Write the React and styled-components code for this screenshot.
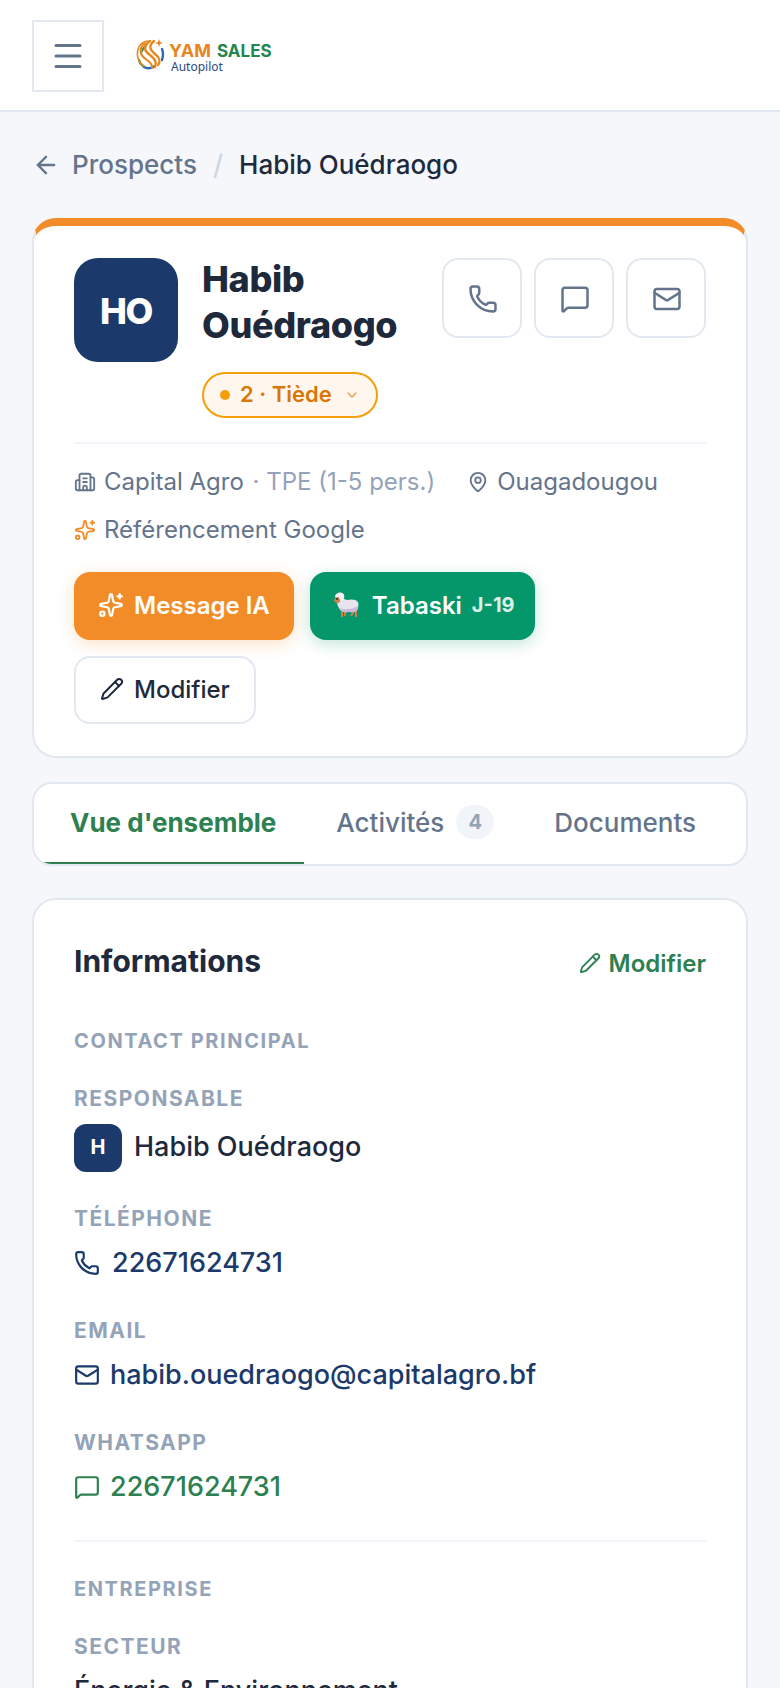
import React from "react";
import styled, { createGlobalStyle, css } from "styled-components";
import {
  ArrowLeft,
  Building2,
  ChevronDown,
  Mail,
  MapPin,
  Menu,
  MessageSquare,
  Pencil,
  Phone,
  Sparkles,
} from "lucide-react";

const c = {
  page: "#f5f7fb",
  line: "#e2e8f0",
  softLine: "#f1f5f9",
  ink: "#1e293b",
  muted: "#64748b",
  faint: "#94a3b8",
  navy: "#1b3a6b",
  orange: "#f28c28",
  green: "#2d8050",
};

const GlobalStyle = createGlobalStyle`
  *, *::before, *::after { box-sizing: border-box; }
  body { margin: 0; background: ${c.page}; }
  body, button, select { font-family: Inter, "Liberation Sans", sans-serif; }
  h1, h2, h3, p, dl, dd, ul { margin: 0; padding: 0; }
  button { cursor: pointer; }
  svg { flex: none; display: block; }
`;

const Shell = styled.div`
  display: flex;
  flex-direction: column;
  height: 100vh;
  color: ${c.ink};
`;

const TopBar = styled.header`
  display: flex;
  align-items: center;
  gap: 32px;
  padding: 20px 32px 18px;
  background: #fff;
  border-bottom: 2px solid ${c.line};
`;

const MenuButton = styled.button`
  display: grid;
  place-items: center;
  width: 72px;
  height: 72px;
  padding: 0;
  color: ${c.muted};
  background: #fff;
  border: 2px solid ${c.line};
`;

const Page = styled.main`
  flex: 1;
  min-height: 0;
  overflow-y: auto;
  scrollbar-width: none;
  padding: 32px;
`;

const Breadcrumb = styled.nav`
  display: flex;
  align-items: center;
  gap: 16px;
  margin-bottom: 32px;
  font-size: 26px;
  line-height: 42px;
  font-weight: 500;
`;

const BackLink = styled.a`
  display: flex;
  align-items: center;
  gap: 12px;
  color: ${c.muted};
  text-decoration: none;
`;

const Slash = styled.span`
  color: #cbd5e1;
  font-size: 28px;
  font-weight: 400;
`;

const Card = styled.section`
  padding: ${(p) => (p.$accent ? "32px 40px" : "40px")};
  background: #fff;
  border: 2px solid ${c.line};
  border-radius: 24px;
  ${(p) => p.$accent && css`border-top: 8px solid ${c.orange};`}
`;

const ProfileTop = styled.div`
  display: flex;
  align-items: flex-start;
  gap: 24px;
  padding-bottom: 24px;
  border-bottom: 2px solid ${c.softLine};
`;

const Avatar = styled.span`
  flex: none;
  display: grid;
  place-items: center;
  width: ${(p) => (p.$small ? 48 : 104)}px;
  height: ${(p) => (p.$small ? 48 : 104)}px;
  padding: ${(p) => (p.$small ? "0 0 2px" : "2px 0 0")};
  border-radius: ${(p) => (p.$small ? 12 : 24)}px;
  background: ${c.navy};
  color: #fff;
  font-size: ${(p) => (p.$small ? 20 : 36)}px;
  font-weight: ${(p) => (p.$small ? 700 : 800)};
  letter-spacing: ${(p) => (p.$small ? "0" : "-0.04em")};
`;

const Identity = styled.div`
  flex: 1;
  min-width: 0;
  display: flex;
  flex-direction: column;
  align-items: flex-start;
  gap: 24px;
  margin-top: -2px;
`;

const Name = styled.h1`
  font-size: 36px;
  line-height: 46px;
  font-weight: 800;
  letter-spacing: -0.01em;
`;

const StatusPill = styled.label`
  display: flex;
  align-items: center;
  gap: 10px;
  height: 46px;
  padding: 0 16px;
  border: 2px solid #f59e0b;
  border-radius: 23px;
  background: #fff7ed;
  color: #d97706;
  & > svg { margin-left: 2px; opacity: 0.7; }
`;

const Dot = styled.span`
  width: 10px;
  height: 10px;
  border-radius: 50%;
  background: #f59e0b;
`;

const StatusSelect = styled.select`
  appearance: none;
  field-sizing: content;
  margin: 0;
  padding: 0 0 2px;
  border: 0;
  background: transparent;
  color: inherit;
  font-size: 22px;
  line-height: 32px;
  font-weight: 600;
`;

const QuickActions = styled.div`
  display: flex;
  gap: 12px;
`;

const IconButton = styled.button`
  display: grid;
  place-items: center;
  width: 80px;
  height: 80px;
  padding: 2px 0 0 2px;
  color: ${c.muted};
  background: #fff;
  border: 2px solid ${c.line};
  border-radius: 16px;
`;

const Facts = styled.ul`
  display: flex;
  flex-wrap: wrap;
  gap: 12px 32px;
  padding: 20px 0 24px;
  list-style: none;
`;

const Fact = styled.li`
  display: flex;
  align-items: center;
  gap: 8px;
  color: ${c.muted};
  font-size: 24px;
  line-height: 36px;
  & > svg { color: ${(p) => p.$tint || c.muted}; }
`;

const Faint = styled.span`
  margin-left: 2px;
  color: ${c.faint};
`;

const Actions = styled.div`
  display: flex;
  flex-wrap: wrap;
  gap: 16px;
  padding-right: 120px;
`;

const tones = {
  orange: css`
    color: #fff;
    background: ${c.orange};
    box-shadow: 0 4px 16px rgba(242, 140, 40, 0.25);
    font-weight: 600;
  `,
  green: css`
    padding: 0 20px 2px;
    color: #fff;
    background: #059669;
    box-shadow: 0 4px 16px rgba(5, 150, 105, 0.25);
    font-weight: 600;
  `,
  plain: css`
    color: ${c.ink};
    background: #fff;
    border: 2px solid ${c.line};
    font-weight: 500;
  `,
};

const ActionButton = styled.button`
  display: flex;
  align-items: center;
  gap: 10px;
  height: 68px;
  padding: 0 24px 2px;
  border: 0;
  border-radius: 16px;
  font-size: 24px;
  ${(p) => tones[p.$tone]}
`;

const Countdown = styled.span`
  font-size: 20px;
  font-weight: 700;
  opacity: 0.85;
`;

const TabList = styled.div`
  display: flex;
  gap: 4px;
  margin: 24px 0 32px;
  padding: 0 8px;
  overflow: hidden;
  background: #fff;
  border: 2px solid ${c.line};
  border-radius: 20px;
`;

const Tab = styled.button`
  display: flex;
  align-items: center;
  gap: 12px;
  height: 80px;
  padding: 0 28px 2px;
  background: none;
  border: 0;
  border-bottom: 2px solid ${(p) => (p.$active ? c.green : "transparent")};
  color: ${(p) => (p.$active ? c.green : c.muted)};
  font-size: 26px;
  font-weight: ${(p) => (p.$active ? 700 : 500)};
`;

const Count = styled.span`
  min-width: 38px;
  padding: 0 12px;
  border-radius: 17px;
  background: ${c.softLine};
  color: ${c.faint};
  font-size: 20px;
  line-height: 34px;
  font-weight: 700;
`;

const CardHead = styled.div`
  display: flex;
  align-items: center;
  justify-content: space-between;
  margin-bottom: 44px;
`;

const CardTitle = styled.h2`
  font-size: 30px;
  line-height: 42px;
  font-weight: 700;
`;

const TextButton = styled.button`
  display: flex;
  align-items: center;
  gap: 8px;
  padding: 4px 0 0;
  border: 0;
  background: none;
  color: ${c.green};
  font-size: 24px;
  font-weight: 600;
`;

const Group = styled.div`
  & + & {
    margin-top: 32px;
    padding-top: 32px;
    border-top: 2px solid ${c.softLine};
  }
`;

const labelText = css`
  color: ${c.faint};
  line-height: 30px;
  font-weight: 700;
  text-transform: uppercase;
`;

const GroupTitle = styled.h3`
  ${labelText}
  margin-bottom: 28px;
  font-size: 20px;
  letter-spacing: 0.08em;
`;

const Fields = styled.dl`
  display: flex;
  flex-direction: column;
  gap: 32px;
`;

const FieldLabel = styled.dt`
  ${labelText}
  margin-bottom: 10px;
  font-size: 21px;
  letter-spacing: 0.07em;
`;

const FieldValue = styled.dd`
  display: flex;
  align-items: center;
  min-height: 40px;
  gap: 12px;
  font-size: 27px;
  line-height: 36px;
`;

const ValueText = styled.span`
  padding-bottom: 2px;
  font-weight: 500;
`;

const ValueLink = styled.a`
  display: flex;
  align-items: center;
  gap: ${(p) => p.$gap || 10}px;
  color: ${(p) => p.$color};
  text-decoration: none;
  & > svg { margin-bottom: 2px; }
`;

function Logo() {
  return (
    <svg width="140" height="48" viewBox="0 0 140 48" role="img" aria-label="YAM Sales Autopilot">
      <g fill="none" strokeLinecap="round">
        <path d="M3 28 Q4 32 7 34" stroke="#2b9a5b" strokeWidth="2.4" />
        <path d="M5 21 Q7 16 11 12" stroke="#2b9a5b" strokeWidth="2" />
        <path d="M8 35 Q13 38 19 34" stroke="#2f6cb8" strokeWidth="2.6" />
        <path d="M26 17 Q28 22 26 28" stroke="#2f6cb8" strokeWidth="2.4" />
        <path d="M12 9 C3 10 0 19 2 26 C3 30 5 32 8 34" stroke="#ea871c" strokeWidth="1.6" />
        <path d="M9 11 C1 18 5 24 11 28 C15 31 17 33 16 36" stroke="#ea871c" strokeWidth="2" />
        <path d="M14 9 C7 14 8 19 14 23 C19 27 21 30 19 35" stroke="#ea871c" strokeWidth="2.4" />
        <path d="M18 9 C12 14 14 18 19 22 C24 26 25 29 22 33" stroke="#ea871c" strokeWidth="2.4" />
      </g>
      <path d="M23 7 L24 10 L27 11 L24 12 L23 15 L22 12 L19 11 L22 10 Z" fill="#e8851c" />
      <text x="33" y="25" fontFamily="Inter, sans-serif" fontSize="18" fontWeight="700" fill="#e8851c">YAM</text>
      <text x="81" y="25" fontFamily="Inter, sans-serif" fontSize="17" fontWeight="700" fill="#23864f">SALES</text>
      <text x="35" y="39" fontFamily="'Noto Sans', sans-serif" fontSize="12" fill="#2c4a7c">Autopilot</text>
    </svg>
  );
}

function Sheep() {
  return (
    <svg width="32" height="28" viewBox="0 0 32 28" aria-hidden="true">
      <path d="M12 19v7M15 20v5M24 20l-3 5M26 18v8" fill="none" stroke="#cf7d4a" strokeWidth="2" />
      <path d="M7 9C10 7 14 8 17 9C21 8 26 8 28 11C29 15 28 19 26 20C23 21 20 21 18 21C14 22 10 20 9 17C7 14 7 12 7 9Z" fill="#e9e3ee" />
      <path d="M10 17C14 19 22 19 28 15C28 19 26 21 24 21C21 22 19 21 18 21C14 22 11 20 10 17Z" fill="#c9bad9" />
      <path d="M4 9C5 6 8 5 10 6L10 11C8 13 4 12 4 9Z" fill="#cf8148" />
      <circle cx="7" cy="8" r="1" fill="#3f2a20" />
      <path d="M5 6C5 1 13 0 14 4C15 8 13 10 11 9C9 9 10 6 8 6C7 6 6 7 5 6Z" fill="#f6f1f4" />
    </svg>
  );
}

export default function App() {
  return (
    <Shell>
      <GlobalStyle />
      <TopBar>
        <MenuButton aria-label="Menu"><Menu size={36} /></MenuButton>
        <Logo />
      </TopBar>
      <Page>
        <Breadcrumb aria-label="Fil d'Ariane">
          <BackLink href="#prospects"><ArrowLeft size={28} />Prospects</BackLink>
          <Slash>/</Slash>
          <span>Habib Ouédraogo</span>
        </Breadcrumb>

        <Card $accent>
          <ProfileTop>
            <Avatar>HO</Avatar>
            <Identity>
              <Name>Habib Ouédraogo</Name>
              <StatusPill>
                <Dot />
                <StatusSelect aria-label="Statut" defaultValue="2">
                  <option value="2">2 · Tiède</option>
                </StatusSelect>
                <ChevronDown size={16} />
              </StatusPill>
            </Identity>
            <QuickActions>
              <IconButton aria-label="Appeler"><Phone size={30} /></IconButton>
              <IconButton aria-label="WhatsApp"><MessageSquare size={30} /></IconButton>
              <IconButton aria-label="Email"><Mail size={30} /></IconButton>
            </QuickActions>
          </ProfileTop>
          <Facts>
            <Fact>
              <Building2 size={22} />
              <span>Capital Agro <Faint>· TPE (1-5 pers.)</Faint></span>
            </Fact>
            <Fact><MapPin size={22} />Ouagadougou</Fact>
            <Fact $tint={c.orange}><Sparkles size={22} />Référencement Google</Fact>
          </Facts>
          <Actions>
            <ActionButton $tone="orange"><Sparkles size={26} />Message IA</ActionButton>
            <ActionButton $tone="green"><Sheep />Tabaski<Countdown>J-19</Countdown></ActionButton>
            <ActionButton $tone="plain"><Pencil size={24} />Modifier</ActionButton>
          </Actions>
        </Card>

        <TabList role="tablist">
          <Tab role="tab" aria-selected="true" $active>Vue d'ensemble</Tab>
          <Tab role="tab" aria-selected="false">Activités<Count>4</Count></Tab>
          <Tab role="tab" aria-selected="false">Documents</Tab>
        </TabList>

        <Card>
          <CardHead>
            <CardTitle>Informations</CardTitle>
            <TextButton><Pencil size={22} />Modifier</TextButton>
          </CardHead>
          <Group>
            <GroupTitle>Contact principal</GroupTitle>
            <Fields>
              <div>
                <FieldLabel>Responsable</FieldLabel>
                <FieldValue><Avatar $small>H</Avatar><ValueText>Habib Ouédraogo</ValueText></FieldValue>
              </div>
              <div>
                <FieldLabel>Téléphone</FieldLabel>
                <FieldValue>
                  <ValueLink href="tel:22671624731" $color={c.navy} $gap={12}>
                    <Phone size={26} /><ValueText>22671624731</ValueText>
                  </ValueLink>
                </FieldValue>
              </div>
              <div>
                <FieldLabel>Email</FieldLabel>
                <FieldValue>
                  <ValueLink href="mailto:habib.ouedraogo@capitalagro.bf" $color={c.navy}>
                    <Mail size={26} /><ValueText>habib.ouedraogo@capitalagro.bf</ValueText>
                  </ValueLink>
                </FieldValue>
              </div>
              <div>
                <FieldLabel>WhatsApp</FieldLabel>
                <FieldValue>
                  <ValueLink href="#whatsapp" $color={c.green}>
                    <MessageSquare size={26} /><ValueText>22671624731</ValueText>
                  </ValueLink>
                </FieldValue>
              </div>
            </Fields>
          </Group>
          <Group>
            <GroupTitle>Entreprise</GroupTitle>
            <Fields>
              <div>
                <FieldLabel>Secteur</FieldLabel>
                <FieldValue><ValueText>Énergie &amp; Environnement</ValueText></FieldValue>
              </div>
            </Fields>
          </Group>
        </Card>
      </Page>
    </Shell>
  );
}
